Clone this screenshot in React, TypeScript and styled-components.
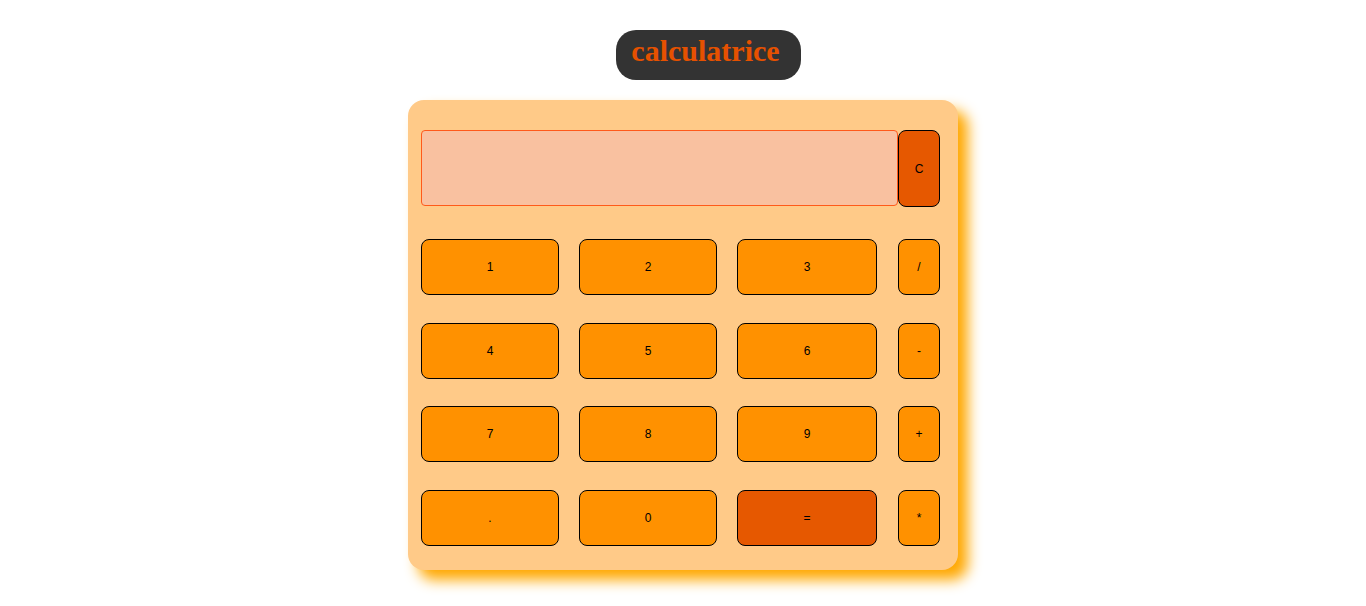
import React, { FC } from "react";
import styled, { createGlobalStyle } from "styled-components";

const GlobalStyle = createGlobalStyle`
  body {
    margin: 0;
    background: #ffffff;
    font-family: "Liberation Sans", Arial, sans-serif;
  }
`;

const Page = styled.div`
  display: flex;
  flex-direction: column;
  align-items: center;
  padding: 30px 0 36px 0;
`;

const Title = styled.h1`
  margin: 0 0 20px 51px;
  height: 50px;
  padding: 0 21px 8px 15px;
  box-sizing: border-box;
  display: flex;
  align-items: center;
  background-color: #333333;
  border-radius: 20px;
  color: #e65100;
  font-family: "Liberation Serif", "Times New Roman", serif;
  font-weight: bold;
  font-size: 30px;
`;

const Calculator = styled.div`
  width: 550px;
  height: 470px;
  box-sizing: border-box;
  padding: 30px 18px 0 13px;
  background-color: #ffca88;
  border-radius: 16px;
  box-shadow: 10px 10px 14px #ffa800;
`;

const DisplayRow = styled.div`
  display: flex;
  height: 77px;
  margin-bottom: 32px;
`;

const Screen = styled.div`
  width: 477px;
  height: 76px;
  box-sizing: border-box;
  background-color: #f9c1a0;
  border: 1px solid #ff5a1a;
  border-radius: 4px;
`;

const Keys = styled.div`
  display: grid;
  grid-template-columns: 138px 138px 140px 42px;
  grid-auto-rows: 56px;
  column-gap: 20px;
  row-gap: 27.7px;
  & > :nth-child(4n) {
    margin-left: 1px;
  }
`;

const Key = styled.button<{ $dark?: boolean; $tall?: boolean }>`
  width: ${(p) => (p.$tall ? "42px" : "100%")};
  height: ${(p) => (p.$tall ? "77px" : "56px")};
  padding: 0;
  box-sizing: border-box;
  background-color: ${(p) => (p.$dark ? "#e65800" : "#ff9100")};
  border: 1px solid #000000;
  border-radius: 8px;
  font-family: "Liberation Sans", Arial, sans-serif;
  font-size: 12px;
  color: #000000;
`;

const keys: { label: string; dark?: boolean }[] = [
  { label: "1" },
  { label: "2" },
  { label: "3" },
  { label: "/" },
  { label: "4" },
  { label: "5" },
  { label: "6" },
  { label: "-" },
  { label: "7" },
  { label: "8" },
  { label: "9" },
  { label: "+" },
  { label: "." },
  { label: "0" },
  { label: "=", dark: true },
  { label: "*" },
];

const App: FC = () => {
  return (
    <Page>
      <GlobalStyle />
      <Title>calculatrice</Title>
      <Calculator>
        <DisplayRow>
          <Screen />
          <Key $dark $tall>
            C
          </Key>
        </DisplayRow>
        <Keys>
          {keys.map((k) => (
            <Key key={k.label} $dark={k.dark}>
              {k.label}
            </Key>
          ))}
        </Keys>
      </Calculator>
    </Page>
  );
};

export default App;
